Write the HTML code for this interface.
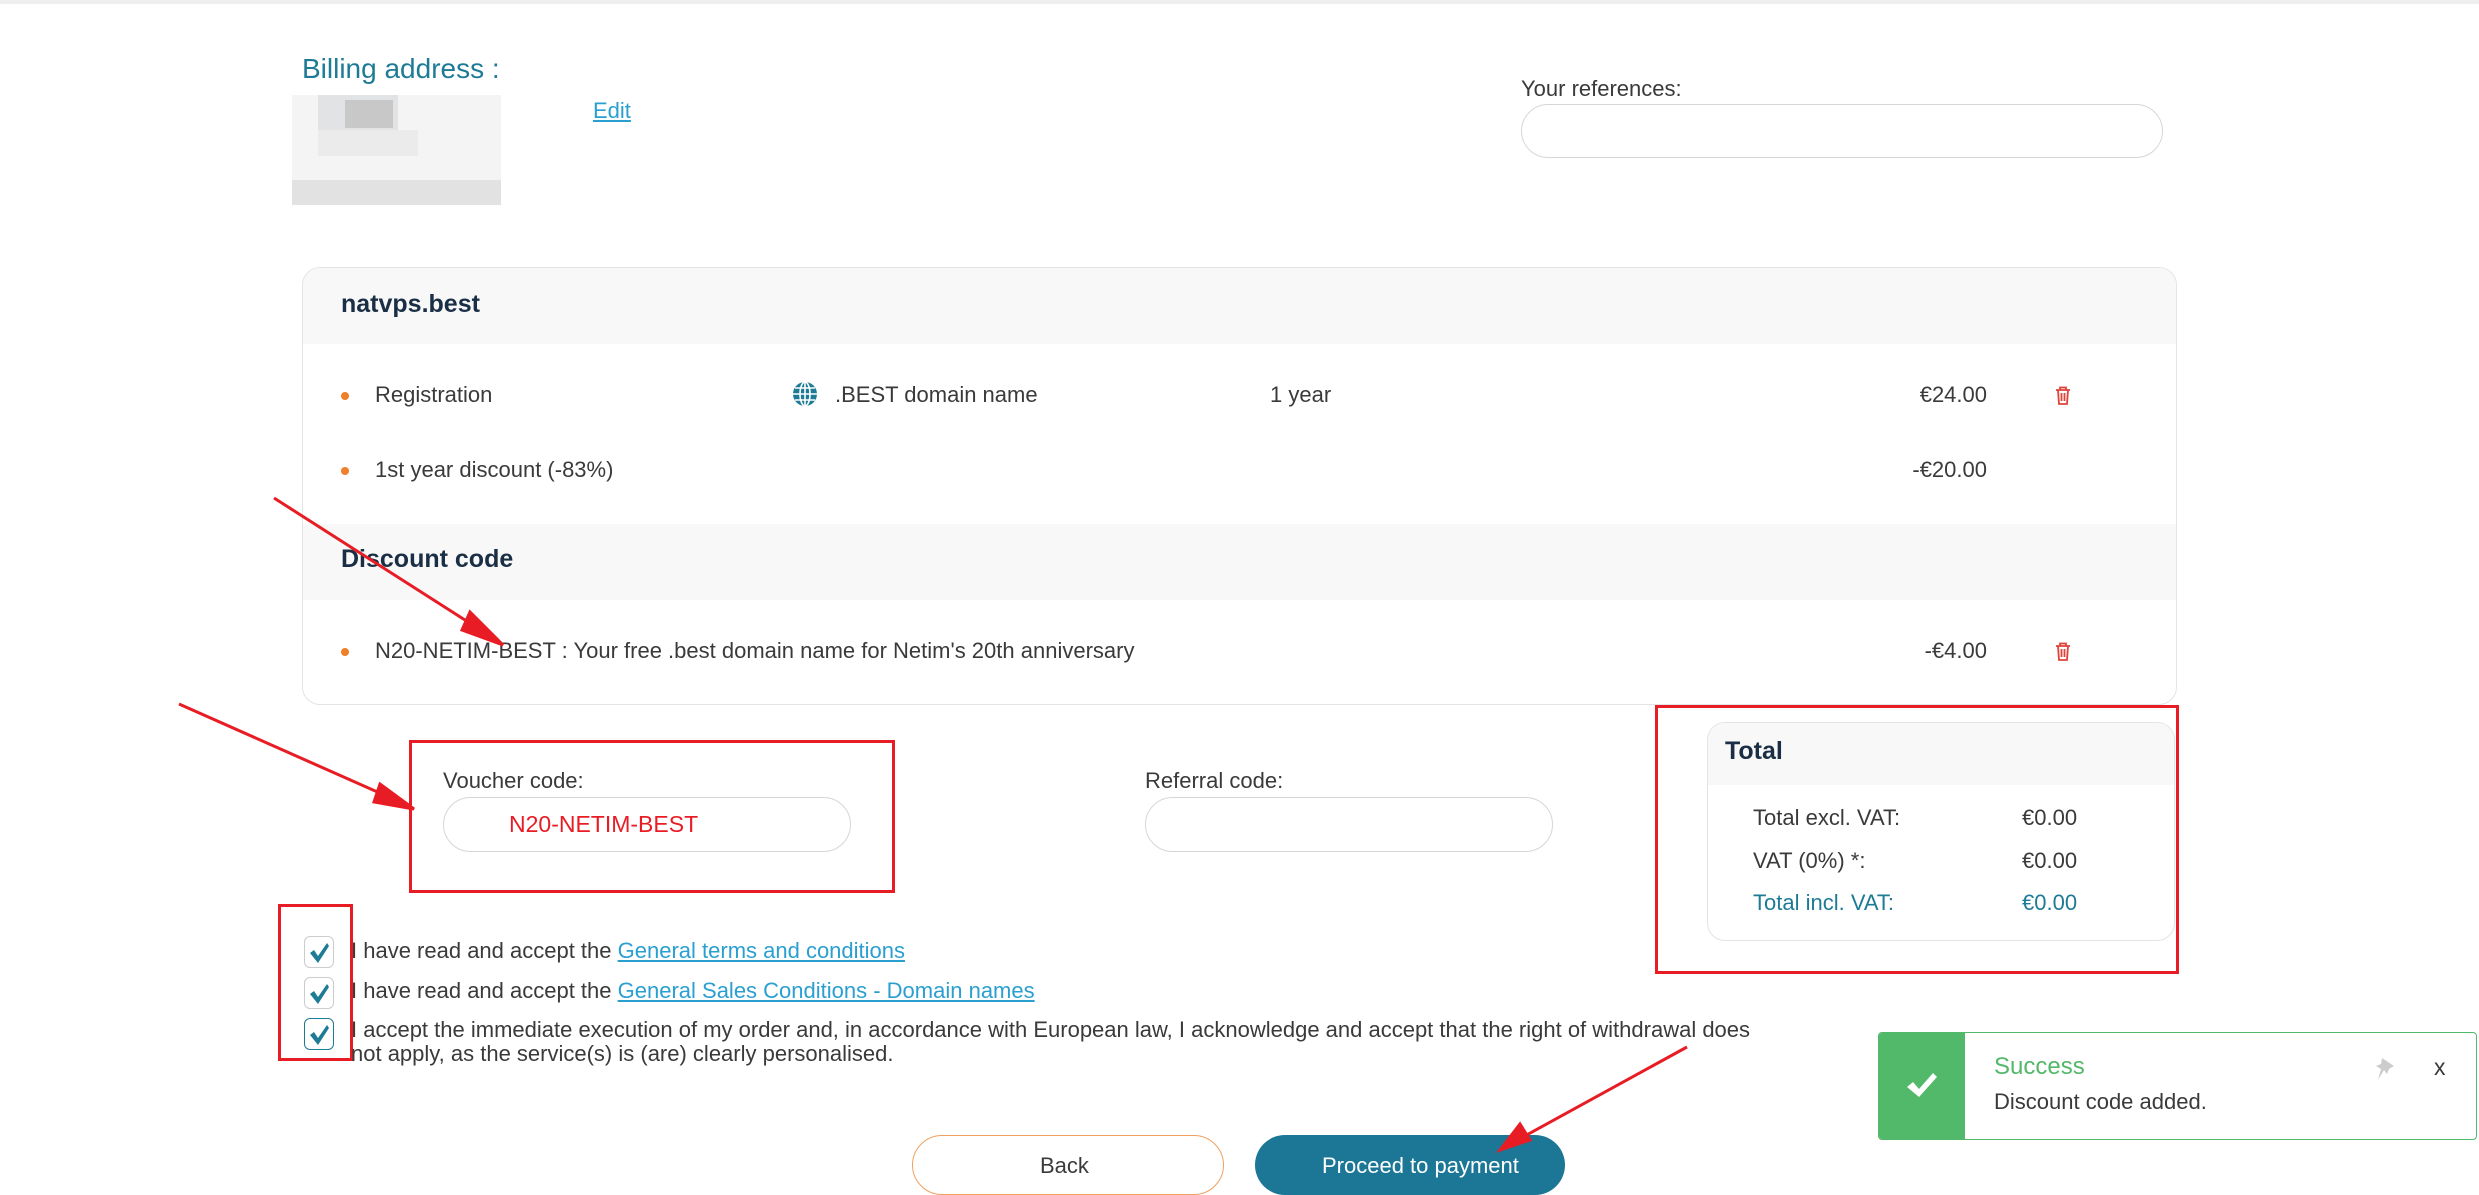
<!DOCTYPE html>
<html><head><meta charset="utf-8"><style>
*{box-sizing:border-box;margin:0;padding:0}
body{width:2479px;height:1157px;background:#fff;font-family:"Liberation Sans",sans-serif;color:#3a3a3a;position:relative;overflow:hidden;font-size:22px}
.a{position:absolute;white-space:nowrap}
.in{position:absolute;border:1.5px solid #d6d6d6;border-radius:28px;background:#fff}
.red{position:absolute;border:3px solid #e81c24}
.dot{position:absolute;width:8px;height:8px;border-radius:50%;background:#f07f2a}
.cb{position:absolute;left:304px;width:30px;height:32px;border:1.5px solid #ccc;border-radius:6px;background:#fff}
a{color:#2a9fd0;text-decoration:underline}
</style></head><body>
<div style="position:absolute;left:0;top:0;width:2479px;height:4px;background:#eee"></div>
<div class="a" style="left:302px;top:53px;font-size:28px;color:#1e7b96">Billing address :</div>
<div style="position:absolute;left:292px;top:95px;width:209px;height:110px;background:#f4f4f5"></div>
<div style="position:absolute;left:318px;top:95px;width:80px;height:38px;background:#e2e3e5"></div>
<div style="position:absolute;left:345px;top:100px;width:48px;height:28px;background:#c8c8c8"></div>
<div style="position:absolute;left:292px;top:180px;width:209px;height:25px;background:#e2e2e3"></div>
<div style="position:absolute;left:318px;top:130px;width:100px;height:26px;background:#ebebec"></div>
<div class="a" style="left:593px;top:98px"><a>Edit</a></div>
<div class="a" style="left:1521px;top:76px">Your references:</div>
<div class="in" style="left:1521px;top:104px;width:642px;height:54px"></div>

<div style="position:absolute;left:302px;top:267px;width:1875px;height:438px;border:1.5px solid #e4e4e4;border-radius:18px;overflow:hidden">
<div style="height:76px;background:#f8f8f8"></div>
<div style="position:absolute;left:0;top:256px;width:100%;height:76px;background:#f8f8f8"></div>
</div>
<div class="a" style="left:341px;top:290px;font-size:25px;font-weight:bold;color:#1a2f45">natvps.best</div>
<div class="dot" style="left:341px;top:392px"></div>
<div class="a" style="left:375px;top:382px">Registration</div>
<svg style="position:absolute;left:792px;top:381px" width="26" height="26" viewBox="0 0 26 26"><circle cx="13" cy="13" r="12" fill="#1e7b96"/><g stroke="#fff" stroke-width="1.6" fill="none"><ellipse cx="13" cy="13" rx="5" ry="12"/><line x1="1" y1="13" x2="25" y2="13"/><line x1="3" y1="7" x2="23" y2="7"/><line x1="3" y1="19" x2="23" y2="19"/><line x1="13" y1="1" x2="13" y2="25"/></g></svg>
<div class="a" style="left:835px;top:382px">.BEST domain name</div>
<div class="a" style="left:1270px;top:382px">1 year</div>
<div class="a" style="left:1887px;top:382px;width:100px;text-align:right">€24.00</div>
<svg style="position:absolute;left:2055px;top:386px" width="16" height="19" viewBox="0 0 16 19"><g fill="none" stroke="#e0433a" stroke-width="1.8"><path d="M1 4h14M5 4V1.5h6V4M3 4l1 14h8l1-14M6.5 7v8M9.5 7v8"/></g></svg>
<div class="dot" style="left:341px;top:467px"></div>
<div class="a" style="left:375px;top:457px">1st year discount (-83%)</div>
<div class="a" style="left:1887px;top:457px;width:100px;text-align:right">-€20.00</div>
<div class="a" style="left:341px;top:545px;font-size:25px;font-weight:bold;color:#1a2f45">Discount code</div>
<div class="dot" style="left:341px;top:648px"></div>
<div class="a" style="left:375px;top:638px">N20-NETIM-BEST : Your free .best domain name for Netim's 20th anniversary</div>
<div class="a" style="left:1887px;top:638px;width:100px;text-align:right">-€4.00</div>
<svg style="position:absolute;left:2055px;top:642px" width="16" height="19" viewBox="0 0 16 19"><g fill="none" stroke="#e0433a" stroke-width="1.8"><path d="M1 4h14M5 4V1.5h6V4M3 4l1 14h8l1-14M6.5 7v8M9.5 7v8"/></g></svg>

<div class="a" style="left:443px;top:768px">Voucher code:</div>
<div class="in" style="left:443px;top:797px;width:408px;height:55px"></div>
<div class="a" style="left:509px;top:811px;color:#e81c24;font-size:23px">N20-NETIM-BEST</div>
<div class="red" style="left:409px;top:740px;width:486px;height:153px"></div>
<div class="a" style="left:1145px;top:768px">Referral code:</div>
<div class="in" style="left:1145px;top:797px;width:408px;height:55px"></div>

<div style="position:absolute;left:1707px;top:722px;width:468px;height:219px;border:1.5px solid #e4e4e4;border-radius:18px;overflow:hidden"><div style="height:62px;background:#f8f8f8"></div></div>
<div class="a" style="left:1725px;top:737px;font-size:25px;font-weight:bold;color:#1a2f45">Total</div>
<div class="a" style="left:1753px;top:805px">Total excl. VAT:</div><div class="a" style="left:2022px;top:805px">€0.00</div>
<div class="a" style="left:1753px;top:848px">VAT (0%) *:</div><div class="a" style="left:2022px;top:848px">€0.00</div>
<div class="a" style="left:1753px;top:890px;color:#1e7b96">Total incl. VAT:</div><div class="a" style="left:2022px;top:890px;color:#1e7b96">€0.00</div>
<div class="red" style="left:1655px;top:705px;width:524px;height:269px"></div>

<div class="cb" style="top:936px"></div><div class="cb" style="top:977px"></div><div class="cb" style="top:1018px;border-color:#1e7b96"></div>
<svg style="position:absolute;left:304px;top:936px" width="30" height="120"><g fill="#1e7b96"><path d="M6 17l4-3 4 6 9-13 2 3-11 17z"/><path d="M6 58l4-3 4 6 9-13 2 3-11 17z"/><path d="M6 99l4-3 4 6 9-13 2 3-11 17z"/></g></svg>
<div class="red" style="left:278px;top:904px;width:75px;height:157px"></div>
<div class="a" style="left:351px;top:938px">I have read and accept the <a>General terms and conditions</a></div>
<div class="a" style="left:351px;top:978px">I have read and accept the <a>General Sales Conditions - Domain names</a></div>
<div class="a" style="left:351px;top:1018px;line-height:24px">I accept the immediate execution of my order and, in accordance with European law, I acknowledge and accept that the right of withdrawal does<br>not apply, as the service(s) is (are) clearly personalised.</div>

<div style="position:absolute;left:912px;top:1135px;width:312px;height:60px;border:1.5px solid #f0a060;border-radius:30px"></div>
<div class="a" style="left:1040px;top:1153px">Back</div>
<div style="position:absolute;left:1255px;top:1135px;width:310px;height:60px;background:#1b7795;border-radius:30px"></div>
<div class="a" style="left:1322px;top:1153px;color:#fff">Proceed to payment</div>

<div style="position:absolute;left:1878px;top:1032px;width:599px;height:108px;border:1.5px solid #52b86a;border-radius:4px;background:#fff;overflow:hidden"><div style="width:86px;height:100%;background:#52b86a"></div></div>
<svg style="position:absolute;left:1904px;top:1070px" width="34" height="30"><path d="M3 17l6-5 6 7L29 3l4 4-18 20z" fill="#fff"/></svg>
<div class="a" style="left:1994px;top:1053px;font-size:24px;color:#52b86a">Success</div>
<div class="a" style="left:1994px;top:1089px">Discount code added.</div>
<svg style="position:absolute;left:2374px;top:1056px" width="22" height="26"><path d="M8 2l12 8-5 3-2 5-3-4-6 10 3-11-5-3 5-2z" fill="#ccc"/></svg>
<div class="a" style="left:2434px;top:1054px;font-size:23px">x</div>

<svg style="position:absolute;left:0;top:0" width="2479" height="1157"><g stroke="#e81c24" stroke-width="3" fill="#e81c24">
<line x1="274" y1="498" x2="490" y2="636"/><polygon points="503,645 470,612 462,630"/>
<line x1="179" y1="704" x2="400" y2="802"/><polygon points="414,809 380,784 374,802"/>
<line x1="1687" y1="1047" x2="1512" y2="1143"/><polygon points="1500,1150 1520,1124 1530,1140"/>
</g></svg>
</body></html>
